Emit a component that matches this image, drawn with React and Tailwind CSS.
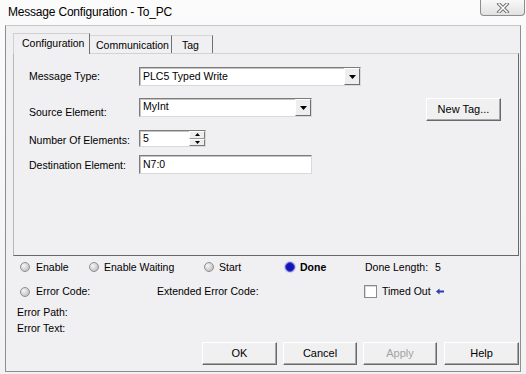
import React from "react";

function Radio({ on }) {
  return on ? (
    <span className="block w-[10px] h-[10px] rounded-full bg-[#1414bc] border border-[#5a5ad0] shadow-[0_0_0_1px_#c9c9ef] shrink-0" />
  ) : (
    <span className="block w-[10px] h-[10px] rounded-full border border-[#8e8e8e] bg-[radial-gradient(circle_at_35%_35%,#f6f6f6,#b2b2b2)] shrink-0" />
  );
}

function DropBtn() {
  return (
    <div className="w-[16px] h-full bg-[#eeeeee] border border-t-white border-l-white border-r-[#6e6e6e] border-b-[#6e6e6e] flex items-center justify-center shrink-0">
      <svg width="7" height="4" viewBox="0 0 7 4">
        <path d="M0 0H7L3.5 4Z" fill="#000" />
      </svg>
    </div>
  );
}

function Field({ w, h = 19, children, right }) {
  return (
    <div
      className={`flex items-stretch bg-white border border-t-[#7c7c7c] border-l-[#7c7c7c] border-r-[#d9d9d9] border-b-[#d9d9d9] shadow-[inset_1px_1px_0_#c4c4c4] ${w} ${h === 19 ? "h-[19px]" : "h-[17px]"}`}
    >
      <div className="flex-1 flex items-center pl-[3px] overflow-hidden whitespace-nowrap">{children}</div>
      {right}
    </div>
  );
}

function Btn({ children, w, disabled, className = "" }) {
  return (
    <div
      className={`${w} h-[23px] flex items-center justify-center bg-[#f0f0f0] border border-t-white border-l-white border-r-[#696969] border-b-[#696969] shadow-[inset_-1px_-1px_0_#a8a8a8] text-[11px] ${disabled ? "text-[#a3a3a3]" : "text-black"} ${className}`}
    >
      {children}
    </div>
  );
}

export default function App() {
  return (
    <div className="w-[526px] h-[374px] overflow-hidden bg-gradient-to-b from-[#fbfbfb] to-[#f2f2f2] font-['Liberation_Sans',Arial,sans-serif] text-black text-[10.5px] leading-none">
      {/* title bar */}
      <div className="flex h-[25px] items-start">
        <div className="pl-[8px] pt-[6px] text-[12px] tracking-[-0.2px] text-black">Message Configuration - To_PC</div>
        <div className="ml-auto mr-[1px] w-[45px] h-[16px] border border-t-0 border-[#8d8d8d] rounded-b-[4px] bg-gradient-to-b from-[#f8f8f8] to-[#e2e2e2] flex items-center justify-center">
          <svg width="14" height="10" viewBox="0 0 14 10">
            <path d="M3 1L11 9M11 1L3 9" stroke="#6c6c6c" strokeWidth="3.4" strokeLinecap="square" />
            <path d="M3 1L11 9M11 1L3 9" stroke="#ffffff" strokeWidth="1.5" strokeLinecap="square" />
          </svg>
        </div>
      </div>

      {/* frame */}
      <div className="ml-[5px] w-[516px] h-[347px] border border-[#8e8e8e] border-t-[#c8c8c8] bg-[#f0eff1] flex flex-col">
        {/* tabs */}
        <div className="mt-[7px] ml-[7px] h-[20px] flex items-end">
          <div className="relative z-10 -mb-px h-[21px] w-[77px] bg-[#f0eff1] border-l border-t border-r border-l-[#d0d0d0] border-t-[#d0d0d0] border-r-[#707070] pl-[8px] pt-[4px]">
            Configuration
          </div>
          <div className="h-[18px] w-[82px] border-t border-r border-t-[#d6d6d6] border-r-[#707070] pl-[6px] pt-[4px]">
            Communication
          </div>
          <div className="h-[18px] w-[41px] border-t border-r border-t-[#d6d6d6] border-r-[#707070] pl-[10px] pt-[4px]">
            Tag
          </div>
        </div>

        {/* panel */}
        <div className="ml-[7px] w-[506px] h-[203px] shrink-0 border border-l-[#b8b8b8] border-t-[#d2d2d2] border-r-[#686868] border-b-[#686868] pl-[15px] pt-[13px]">
          <div className="flex items-center h-[19px]">
            <div className="w-[110px]">Message Type:</div>
            <Field w="w-[222px]" right={<DropBtn />}>PLC5 Typed Write</Field>
          </div>

          <div className="flex items-start mt-[12px]">
            <div className="w-[110px] pt-[9px]">Source Element:</div>
            <Field w="w-[173px]" right={<DropBtn />}>
              <span className="-mt-[3px]">MyInt</span>
            </Field>
            <Btn w="w-[75px]" className="ml-[114px] h-[22px]">New Tag...</Btn>
          </div>

          <div className="flex items-center mt-[9px] h-[17px]">
            <div className="w-[110px] pt-[3px]">Number Of Elements:</div>
            <Field
              w="w-[67px]"
              h={17}
              right={
                <div className="w-[16px] flex flex-col shrink-0">
                  <div className="flex-1 flex items-center justify-center bg-[#eeeeee] border border-t-white border-l-white border-r-[#7a7a7a] border-b-[#9a9a9a]">
                    <svg width="5" height="3" viewBox="0 0 5 3">
                      <path d="M0 3H5L2.5 0Z" fill="#000" />
                    </svg>
                  </div>
                  <div className="flex-1 flex items-center justify-center bg-[#eeeeee] border border-t-white border-l-white border-r-[#7a7a7a] border-b-[#7a7a7a]">
                    <svg width="5" height="3" viewBox="0 0 5 3">
                      <path d="M0 0H5L2.5 3Z" fill="#000" />
                    </svg>
                  </div>
                </div>
              }
            >
              5
            </Field>
          </div>

          <div className="flex items-center mt-[8px] h-[19px]">
            <div className="w-[110px] pt-[1px]">Destination Element:</div>
            <Field w="w-[173px]">N7:0</Field>
          </div>
        </div>

        {/* status */}
        <div className="mt-[5px] pl-[14px] flex items-center h-[12px]">
          <div className="w-[69px] flex items-center gap-[6px]">
            <Radio />
            <span>Enable</span>
          </div>
          <div className="w-[115px] flex items-center gap-[5px]">
            <Radio />
            <span>Enable Waiting</span>
          </div>
          <div className="w-[81px] flex items-center gap-[5px]">
            <Radio />
            <span>Start</span>
          </div>
          <div className="w-[80px] flex items-center gap-[5px]">
            <Radio on />
            <span className="font-bold">Done</span>
          </div>
          <div className="flex items-center">
            <span>Done Length:</span>
            <span className="ml-[7px]">5</span>
          </div>
        </div>

        <div className="mt-[12px] pl-[14px] flex items-center h-[13px]">
          <div className="w-[137px] flex items-center gap-[6px]">
            <Radio />
            <span>Error Code:</span>
          </div>
          <div className="w-[207px]">Extended Error Code:</div>
          <div className="flex items-center">
            <span className="block w-[13px] h-[13px] bg-white border border-[#8a8a8a] shadow-[inset_1px_1px_0_#d8d8d8]" />
            <span className="ml-[5px]">Timed Out</span>
            <svg className="ml-[5px]" width="8" height="7" viewBox="0 0 8 7">
              <path d="M0 3.5L3.5 0.5V2.5H8V4.5H3.5V6.5Z" fill="#2b3bb0" />
            </svg>
          </div>
        </div>

        <div className="mt-[8px] pl-[11px] h-[12px] flex items-center">Error Path:</div>
        <div className="mt-[4px] pl-[11px] h-[12px] flex items-center">Error Text:</div>

        <div className="mt-[8px] pl-[196px] flex">
          <Btn w="w-[75px]">OK</Btn>
          <Btn w="w-[74px]" className="ml-[6px]">Cancel</Btn>
          <Btn w="w-[74px]" className="ml-[6px]" disabled>Apply</Btn>
          <Btn w="w-[75px]" className="ml-[7px]">Help</Btn>
        </div>
      </div>
    </div>
  );
}
